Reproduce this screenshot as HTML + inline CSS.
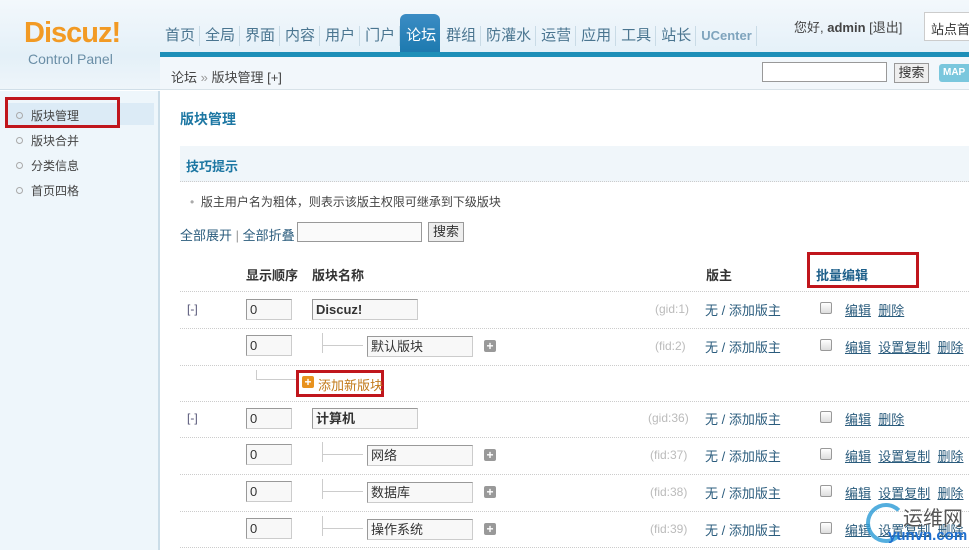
<!DOCTYPE html>
<html><head><meta charset="utf-8"><style>
*{margin:0;padding:0;box-sizing:border-box}
body{width:969px;height:549px;overflow:hidden;position:relative;background:#fff;font-family:"Liberation Sans","Noto Sans CJK SC",sans-serif;font-size:12px;color:#333}
.a{position:absolute;white-space:nowrap}
#hd{position:absolute;left:0;top:0;width:969px;height:56px;background:linear-gradient(#f3f8fc,#e4f0f8)}
#lg{position:absolute;left:0;top:56px;width:160px;height:34px;background:linear-gradient(#e4f0f8,#eef5fa);border-bottom:1px solid #d0dee8}
.nav{position:absolute;top:26px;font-size:15px;color:#4a7590;height:20px;line-height:20px}
.nav span{display:inline-block;padding:0 4px 0 5px;border-right:1px solid #c9dbe6}
#bar{position:absolute;left:160px;top:52px;width:809px;height:5px;background:#1e8fb8}
#crumb{position:absolute;left:160px;top:57px;width:809px;height:33px;background:#f2f7fb;border-bottom:1px solid #d8e2e8}
#side{position:absolute;left:0;top:91px;width:160px;height:459px;background:#eef6fb;border-right:2px solid #cbdde8}
.si{position:absolute;left:16px;font-size:12px;color:#444}
.si i{display:inline-block;width:7px;height:7px;border:1px solid #aaa;border-radius:50%;margin-right:8px;vertical-align:1px}
.in{position:absolute;height:21px;border:1px solid #999;border-right-color:#ccc;border-bottom-color:#ccc;background:#f8f8f8;font-size:13px;line-height:19px;padding-left:3px;color:#333}
.ln{position:absolute;left:180px;width:789px;border-top:1px dotted #ccc}
.lnk{color:#2b5c7d;text-decoration:underline}
.cb{position:absolute;left:820px;width:12px;height:12px;border:1px solid #999;border-radius:2px;background:linear-gradient(#fff,#ddd)}
.pl{position:absolute;left:484px;width:12px;height:12px;background:#999;border-radius:2px;color:#fff;font-size:12px;line-height:12px;text-align:center;font-weight:bold}
.vl{position:absolute;left:322px;width:1px;height:20px;background:#ccc}
.hl{position:absolute;left:323px;width:40px;height:1px;background:#ccc}
.red{position:absolute;border:3px solid #c0161c}
.gray{color:#bbb}
.m{font-size:13px;color:#2b5c7d}
</style></head><body>
<div id="hd"></div><div id="lg"></div>
<div class="a" style="left:24px;top:17px;font-size:29px;font-weight:bold;color:#f29a24;letter-spacing:-1px">Discuz!</div>
<div class="a" style="left:28px;top:51px;font-size:14px;color:#6a8ea6">Control Panel</div>
<div class="a" style="left:400px;top:14px;width:40px;height:42px;background:linear-gradient(#3b8cc4,#1a78ad);border-radius:6px 6px 0 0"></div>
<div class="nav" style="left:160px"><span>首页</span><span>全局</span><span>界面</span><span>内容</span><span>用户</span><span>门户</span><span style="color:#fff;border:none;padding:0 5px 0 6px">论坛</span><span>群组</span><span>防灌水</span><span>运营</span><span>应用</span><span>工具</span><span>站长</span><span style="font-size:13px;font-weight:bold;color:#7fa4bd">UCenter</span></div>
<div class="a" style="left:794px;top:17px;font-size:13px;color:#444">您好, <b>admin</b> [退出]</div>
<div class="a" style="left:924px;top:12px;width:50px;height:29px;border:1px solid #ccc;background:#fff;font-size:13px;padding:6px 0 0 6px">站点首页</div>
<div id="bar"></div>
<div id="crumb"></div>
<div class="a" style="left:171px;top:67px;font-size:13px;color:#444">论坛 <span style="color:#999">»</span> 版块管理 [+]</div>
<div class="a" style="left:762px;top:62px;width:125px;height:20px;border:1px solid #999;background:#fff"></div>
<div class="a" style="left:894px;top:63px;width:35px;height:20px;border:1px solid #999;background:#eee;font-size:13px;text-align:center;line-height:18px">搜索</div>
<div class="a" style="left:939px;top:64px;width:40px;height:18px;background:#7ac7dd;border-radius:3px;color:#fff;font-size:10px;font-weight:bold;padding:3px 0 0 4px">MAP</div>
<div id="side"></div>
<div class="a" style="left:5px;top:103px;width:149px;height:22px;background:#dcebf6"></div>
<div class="si" style="top:107px"><i></i>版块管理</div>
<div class="si" style="top:132px"><i></i>版块合并</div>
<div class="si" style="top:157px"><i></i>分类信息</div>
<div class="si" style="top:182px"><i></i>首页四格</div>
<div class="red" style="left:5px;top:97px;width:115px;height:31px"></div>
<div class="a" style="left:180px;top:109px;font-size:14px;font-weight:bold;color:#1d77a3">版块管理</div>
<div class="a" style="left:180px;top:146px;width:789px;height:36px;background:#f0f6fa;border-bottom:1px dotted #ccc"></div>
<div class="a" style="left:186px;top:156px;font-size:13px;font-weight:bold;color:#1d77a3">技巧提示</div>
<div class="a" style="left:190px;top:193px;color:#444"><span style="color:#aaa">•</span>&nbsp; 版主用户名为粗体，则表示该版主权限可继承到下级版块</div>
<div class="a" style="left:180px;top:225px;font-size:13px;color:#2b5c7d">全部展开 <span style="color:#999">|</span> 全部折叠</div>
<div class="a" style="left:297px;top:222px;width:125px;height:20px;border:1px solid #999;background:#fafafa"></div>
<div class="a" style="left:428px;top:222px;width:36px;height:20px;border:1px solid #999;background:#eee;font-size:13px;text-align:center;line-height:18px">搜索</div>
<div class="a" style="left:246px;top:265px;font-size:13px;font-weight:bold">显示顺序</div>
<div class="a" style="left:312px;top:265px;font-size:13px;font-weight:bold">版块名称</div>
<div class="a" style="left:706px;top:265px;font-size:13px;font-weight:bold">版主</div>
<div class="a" style="left:816px;top:265px;font-size:13px;font-weight:bold;color:#1d5f8a">批量编辑</div>
<div class="red" style="left:807px;top:252px;width:112px;height:36px"></div>
<div class="ln" style="top:291px"></div><div class="ln" style="top:328px"></div><div class="ln" style="top:365px"></div><div class="ln" style="top:401px"></div><div class="ln" style="top:437px"></div><div class="ln" style="top:474px"></div><div class="ln" style="top:511px"></div><div class="ln" style="top:547px"></div>

<!-- row1 -->
<div class="a" style="left:187px;top:302px;color:#557">[-]</div>
<div class="in" style="left:246px;top:299px;width:46px">0</div>
<div class="in" style="left:312px;top:299px;width:106px;font-weight:bold">Discuz!</div>
<div class="a gray" style="left:655px;top:302px">(gid:1)</div>
<div class="a m" style="left:705px;top:300px">无 / 添加版主</div>
<div class="cb" style="top:302px"></div>
<div class="a" style="left:845px;top:300px;font-size:13px"><span class="lnk">编辑</span>&nbsp;&nbsp;<span class="lnk">删除</span></div>
<!-- row2 -->
<div class="in" style="left:246px;top:335px;width:46px">0</div>
<div class="vl" style="top:333px"></div><div class="hl" style="top:345px"></div>
<div class="in" style="left:367px;top:336px;width:106px">默认版块</div>
<div class="pl" style="top:340px">+</div>
<div class="a gray" style="left:655px;top:339px">(fid:2)</div>
<div class="a m" style="left:705px;top:337px">无 / 添加版主</div>
<div class="cb" style="top:339px"></div>
<div class="a" style="left:845px;top:337px;font-size:13px"><span class="lnk">编辑</span>&nbsp;&nbsp;<span class="lnk">设置复制</span>&nbsp;&nbsp;<span class="lnk">删除</span></div>
<!-- add -->
<div class="a" style="left:256px;top:370px;width:40px;height:10px;border-left:1px solid #ccc;border-bottom:1px solid #ccc"></div>
<div class="red" style="left:296px;top:370px;width:88px;height:27px"></div>
<div class="a" style="left:302px;top:376px;width:12px;height:12px;background:#e8921e;border-radius:2px;color:#fff;font-weight:bold;line-height:12px;text-align:center">+</div>
<div class="a" style="left:318px;top:375px;font-size:13px;color:#c27a1a">添加新版块</div>
<!-- row3 -->
<div class="a" style="left:187px;top:411px;color:#557">[-]</div>
<div class="in" style="left:246px;top:408px;width:46px">0</div>
<div class="in" style="left:312px;top:408px;width:106px;font-weight:bold">计算机</div>
<div class="a gray" style="left:648px;top:411px">(gid:36)</div>
<div class="a m" style="left:705px;top:409px">无 / 添加版主</div>
<div class="cb" style="top:411px"></div>
<div class="a" style="left:845px;top:409px;font-size:13px"><span class="lnk">编辑</span>&nbsp;&nbsp;<span class="lnk">删除</span></div>
<!-- rows 4-6 -->
<div class="in" style="left:246px;top:444px;width:46px">0</div>
<div class="vl" style="top:442px"></div><div class="hl" style="top:454px"></div>
<div class="in" style="left:367px;top:445px;width:106px">网络</div>
<div class="pl" style="top:449px">+</div>
<div class="a gray" style="left:650px;top:448px">(fid:37)</div>
<div class="a m" style="left:705px;top:446px">无 / 添加版主</div>
<div class="cb" style="top:448px"></div>
<div class="a" style="left:845px;top:446px;font-size:13px"><span class="lnk">编辑</span>&nbsp;&nbsp;<span class="lnk">设置复制</span>&nbsp;&nbsp;<span class="lnk">删除</span></div>

<div class="in" style="left:246px;top:481px;width:46px">0</div>
<div class="vl" style="top:479px"></div><div class="hl" style="top:491px"></div>
<div class="in" style="left:367px;top:482px;width:106px">数据库</div>
<div class="pl" style="top:486px">+</div>
<div class="a gray" style="left:650px;top:485px">(fid:38)</div>
<div class="a m" style="left:705px;top:483px">无 / 添加版主</div>
<div class="cb" style="top:485px"></div>
<div class="a" style="left:845px;top:483px;font-size:13px"><span class="lnk">编辑</span>&nbsp;&nbsp;<span class="lnk">设置复制</span>&nbsp;&nbsp;<span class="lnk">删除</span></div>

<div class="in" style="left:246px;top:518px;width:46px">0</div>
<div class="vl" style="top:516px"></div><div class="hl" style="top:528px"></div>
<div class="in" style="left:367px;top:519px;width:106px">操作系统</div>
<div class="pl" style="top:523px">+</div>
<div class="a gray" style="left:650px;top:522px">(fid:39)</div>
<div class="a m" style="left:705px;top:520px">无 / 添加版主</div>
<div class="cb" style="top:522px"></div>
<div class="a" style="left:845px;top:520px;font-size:13px"><span class="lnk">编辑</span>&nbsp;&nbsp;<span class="lnk">设置复制</span>&nbsp;&nbsp;<span class="lnk">删除</span></div>
<!-- watermark -->
<div class="a" style="left:866px;top:503px;width:40px;height:40px;border:4px solid #2a9bd6;border-radius:50%;border-right-color:transparent;opacity:.8"></div>
<div class="a" style="left:903px;top:502px;font-size:20px;color:#555">运维网</div>
<div class="a" style="left:888px;top:527px;font-size:15px;font-weight:bold;color:#1e6fcf">yunvn.com</div>
</body></html>
